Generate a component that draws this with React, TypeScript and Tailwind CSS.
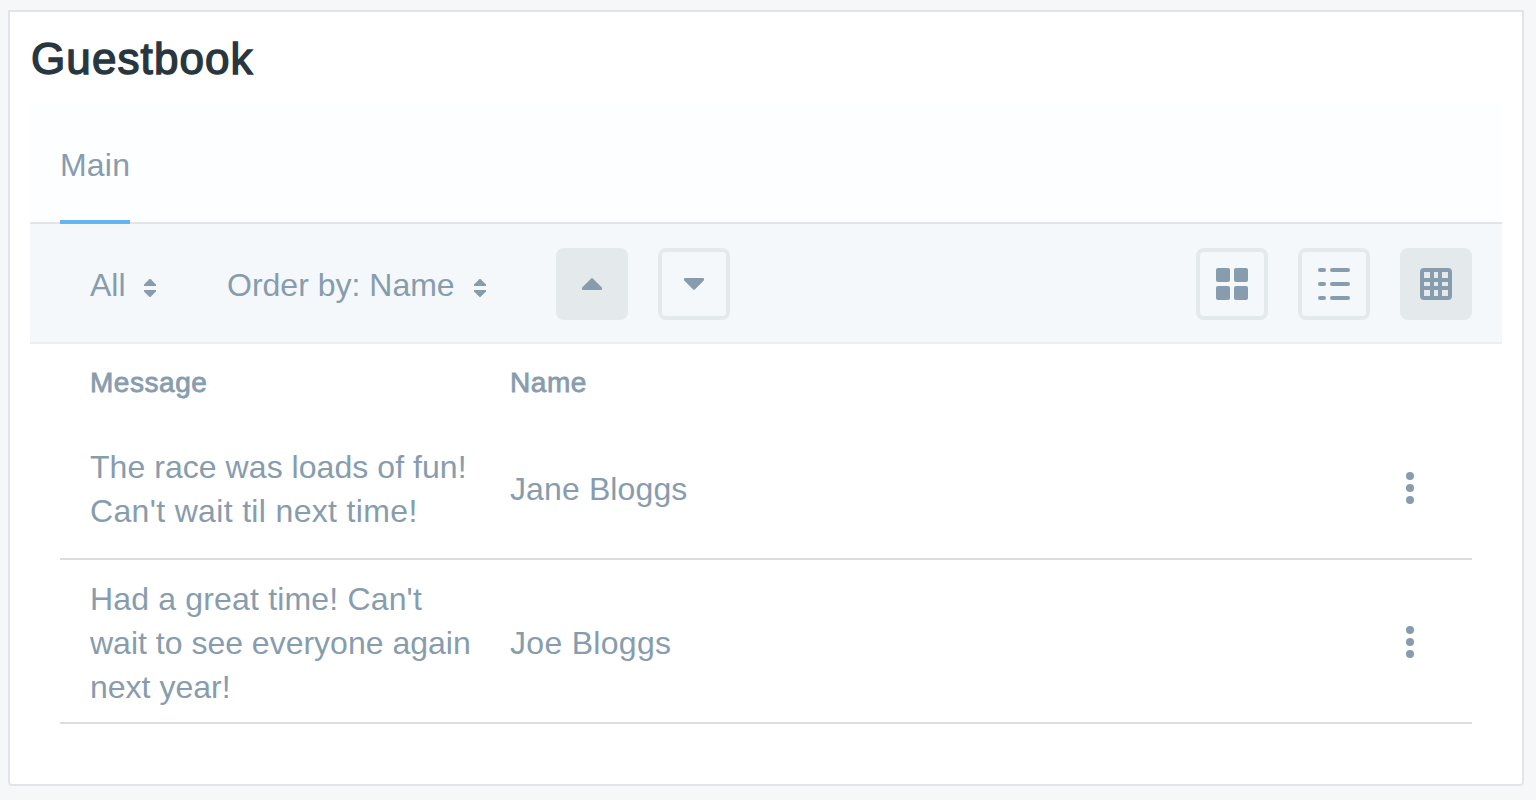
import type { ReactNode } from "react";

const SortIcon = () => (
  <svg width="14" height="18" viewBox="0 0 14 18" fill="currentColor" className="shrink-0">
    <path d="M6.3.3a1 1 0 0 1 1.4 0L13 5.6V7H1V5.6z" />
    <path d="M1 11h12v1.4l-5.3 5.3a1 1 0 0 1-1.4 0L1 12.4z" />
  </svg>
);

const TriangleUp = () => (
  <svg width="20" height="12" viewBox="0 0 20 12" fill="currentColor">
    <path d="M9.2.4a1.2 1.2 0 0 1 1.6 0l8.8 8.8c.3.3.4.6.4 1V11a1 1 0 0 1-1 1H1a1 1 0 0 1-1-1v-.8c0-.4.1-.7.4-1z" />
  </svg>
);

const TriangleDown = () => (
  <svg width="20" height="12" viewBox="0 0 20 12" fill="currentColor">
    <path d="M9.2 11.6a1.2 1.2 0 0 0 1.6 0l8.8-8.8c.3-.3.4-.6.4-1V1a1 1 0 0 0-1-1H1a1 1 0 0 0-1 1v.8c0 .4.1.7.4 1z" />
  </svg>
);

const CardsIcon = () => (
  <svg width="32" height="32" viewBox="0 0 32 32" fill="currentColor">
    <rect width="14" height="14" rx="2" />
    <rect x="18" width="14" height="14" rx="2" />
    <rect y="18" width="14" height="14" rx="2" />
    <rect x="18" y="18" width="14" height="14" rx="2" />
  </svg>
);

const ListIcon = () => (
  <svg width="32" height="32" viewBox="0 0 32 32" fill="currentColor">
    {[0, 14, 28].map((y) => (
      <g key={y}>
        <rect y={y} width="8" height="4" rx="2" />
        <rect x="12" y={y} width="20" height="4" rx="2" />
      </g>
    ))}
  </svg>
);

const TableIcon = () => (
  <svg width="32" height="32" viewBox="0 0 32 32" fill="currentColor">
    <path
      fillRule="evenodd"
      d="M4 0h24a4 4 0 0 1 4 4v24a4 4 0 0 1-4 4H4a4 4 0 0 1-4-4V4a4 4 0 0 1 4-4zM4 4v6h6V4zM14 4v6h4V4zM22 4v6h6V4zM4 14v4h6v-4zM14 14v4h4v-4zM22 14v4h6v-4zM4 22v6h6v-6zM14 22v6h4v-6zM22 22v6h6v-6z"
    />
  </svg>
);

const DotsIcon = () => (
  <svg width="8" height="32" viewBox="0 0 8 32" fill="currentColor">
    <circle cx="4" cy="4" r="4" />
    <circle cx="4" cy="16" r="4" />
    <circle cx="4" cy="28" r="4" />
  </svg>
);

function IconButton({ label, active = false, children }: { label: string; active?: boolean; children: ReactNode }) {
  return (
    <button
      aria-label={label}
      className={`flex size-[72px] items-center justify-center rounded-lg border-4 border-[#e4e9eb] ${active ? "bg-[#e4e9eb]" : ""}`}
    >
      {children}
    </button>
  );
}

function Row({ message, name, className }: { message: ReactNode; name: ReactNode; className: string }) {
  return (
    <div className={`flex items-center border-b-2 border-[#dcdddf] pl-[30px] ${className}`}>
      <div className="w-[384px] pt-0.5">{message}</div>
      <div className="ml-9 flex-1 pt-0.5">{name}</div>
      <button aria-label="Row actions" className="mr-[58px]">
        <DotsIcon />
      </button>
    </div>
  );
}

export default function App() {
  return (
    <div className="h-[800px] w-[1536px] bg-[#f6f7f9] pt-2.5 pl-2 font-['Liberation_Sans',Arial,sans-serif] text-[32px] leading-[44px] text-[#879cad]">
      <main className="h-[776px] w-[1516px] rounded-b-sm border-2 border-[#e1e5e9] bg-white px-5">
        <h1 className="h-[92px] pt-[22px] pl-px text-[44px] leading-[50px] tracking-[1.1px] text-[#28363f] [-webkit-text-stroke:1.4px_#28363f]">
          Guestbook
        </h1>
        <nav className="flex h-[120px] items-end border-b-2 border-[#e1e5e9] bg-[#fdfeff] pl-[30px]">
          <button className="-mb-0.5 h-[81px] w-[70px] border-b-4 border-[#63b4f0] pb-[33px] text-left tracking-[0.2px]">Main</button>
        </nav>
        <div className="flex h-[120px] items-center border-b-2 border-[#ebeff2] bg-[#f4f8fb] pt-0.5 pr-[30px] pl-[60px]">
          <button className="flex w-[137px] items-center gap-[17px]">
            <span className="pt-0.5">All</span>
            <span className="pt-2"><SortIcon /></span>
          </button>
          <button className="flex w-[329px] items-center gap-[18px] whitespace-nowrap">
            <span className="pt-0.5">Order by: Name</span>
            <span className="pt-2"><SortIcon /></span>
          </button>
          <div className="flex gap-[30px]">
            <IconButton label="Ascending" active><TriangleUp /></IconButton>
            <IconButton label="Descending"><TriangleDown /></IconButton>
          </div>
          <div className="ml-auto flex gap-[30px]">
            <IconButton label="Cards"><CardsIcon /></IconButton>
            <IconButton label="List"><ListIcon /></IconButton>
            <IconButton label="Table" active><TableIcon /></IconButton>
          </div>
        </div>
        <section className="px-[30px]">
          <div className="flex h-[74px] pt-[17px] pl-[30px] text-[28px] tracking-[0.55px] [-webkit-text-stroke:0.8px_#879cad]">
            <div className="w-[420px]">Message</div>
            <div>Name</div>
          </div>
          <Row
            message={
              <>
                <span className="tracking-[0.05px]">The race was loads of fun! </span>
                <span className="tracking-[0.34px]">Can't wait til next time!</span>
              </>
            }
            name={<span className="tracking-[0.12px]">Jane Bloggs</span>}
            className="h-[142px]"
          />
          <Row
            message={
              <>
                <span className="tracking-[0.17px]">Had a great time! Can't </span>
                wait to see everyone again next year!
              </>
            }
            name={<span className="tracking-[0.3px]">Joe Bloggs</span>}
            className="h-[164px] pt-0.5"
          />
        </section>
      </main>
    </div>
  );
}
